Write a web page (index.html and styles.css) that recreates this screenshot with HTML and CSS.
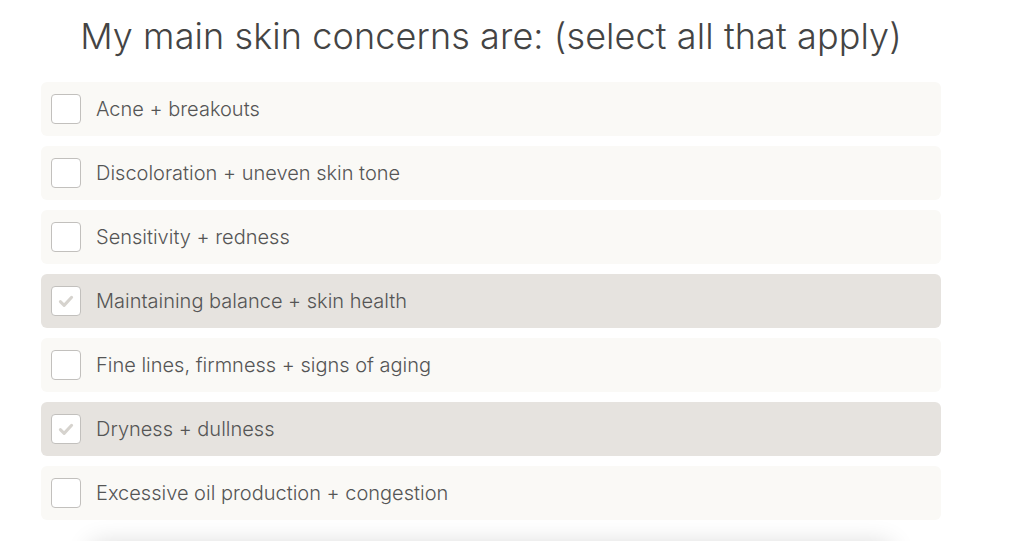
FILE: index.html
```html
<!DOCTYPE HTML>
<html>
    <head>
        <title>Skin concerns</title>
        <meta charset="utf-8" />
        <meta name="viewport" content="width=device-width, initial-scale=1" />
        <link rel="stylesheet" href="styles.css">
    </head>
    <body>
        <div id="quiz">
            <h2>My main skin concerns are: (select all that apply)</h2>
            <div class="options">
                <label class="option"><span class="box"></span>Acne + breakouts</label>
                <label class="option"><span class="box"></span>Discoloration + uneven skin tone</label>
                <label class="option"><span class="box"></span>Sensitivity + redness</label>
                <label class="option checked"><span class="box"><svg viewBox="0 0 16 16" width="20" height="20"><path d="M3.5 8.5l3 3 6-6.5" fill="none" stroke="#d6d3ce" stroke-width="2.4" stroke-linecap="round" stroke-linejoin="round"/></svg></span>Maintaining balance + skin health</label>
                <label class="option"><span class="box"></span>Fine lines, firmness + signs of aging</label>
                <label class="option checked"><span class="box"><svg viewBox="0 0 16 16" width="20" height="20"><path d="M3.5 8.5l3 3 6-6.5" fill="none" stroke="#d6d3ce" stroke-width="2.4" stroke-linecap="round" stroke-linejoin="round"/></svg></span>Dryness + dullness</label>
                <label class="option"><span class="box"></span>Excessive oil production + congestion</label>
            </div>
            <div class="next"></div>
        </div>
    </body>
</html>
```

FILE: styles.css
```css
body {
    margin: 0;
    background-color: #fff;
    font-family: 'Inter', 'Open Sans', sans-serif;
    color: #555;
}

#quiz {
    width: 900px;
    padding: 0 0 0 41px;
}

h2 {
    margin: 0;
    padding-top: 14px;
    height: 82px;
    box-sizing: border-box;
    text-align: center;
    font-size: 36px;
    font-weight: 300;
    color: #444;
    letter-spacing: 0.1px;
}

.options {
    display: flex;
    flex-direction: column;
    gap: 10px;
}

.option {
    display: flex;
    align-items: center;
    height: 54px;
    padding-left: 10px;
    border-radius: 6px;
    background-color: #faf9f6;
    font-size: 20px;
    font-weight: 300;
    color: #555;
    cursor: pointer;
}

.option.checked {
    background-color: #e6e3df;
}

.box {
    display: flex;
    align-items: center;
    justify-content: center;
    width: 28px;
    height: 28px;
    margin-right: 15px;
    border: 1px solid #c2c0bd;
    border-radius: 4px;
    background-color: #fff;
}

.next {
    width: 800px;
    height: 50px;
    margin: 24px auto 0;
    border-radius: 6px;
    background-color: #fff;
    box-shadow: 0 0 26px rgba(0, 0, 0, 0.16);
}
```
